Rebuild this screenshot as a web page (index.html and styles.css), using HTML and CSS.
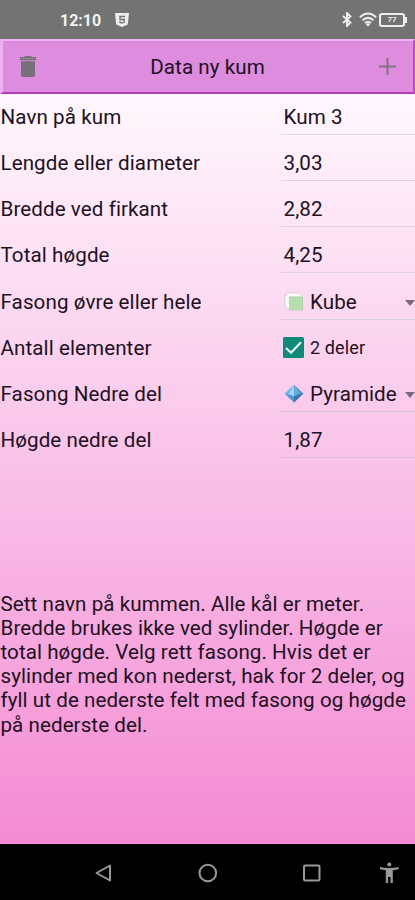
FILE: index.html
```html
<!DOCTYPE html>
<html lang="no">
<head>
<meta charset="utf-8">
<title>Data ny kum</title>
<link rel="stylesheet" href="styles.css">
</head>
<body>
<div class="phone">
  <header class="status">
    <div class="status-left">
      <span class="clock">12:10</span>
      <svg width="14" height="14" viewBox="0 0 14 14"><path d="M0 0h14l-1.2 11.5L7 14l-5.800-2.500z" fill="#eee"/><path d="M10 3.500H5v3h4.300L9 9.300l-2 .8-2-.8V8" fill="none" stroke="#737373" stroke-width="1.400"/></svg>
    </div>
    <div class="status-right">
      <svg class="bt" width="10" height="15" viewBox="0 0 10 15"><path d="M1 4l7.500 6.500L5 14V1l3.500 3.500L1 11" fill="none" stroke="#eee" stroke-width="1.900"/></svg>
      <svg class="wifi" width="18" height="15" viewBox="0 0 18 15"><g fill="none" stroke="#eee" stroke-width="2"><path d="M1 5.300Q9-2.300 17 5.300M3.600 8.300q5.400-4.800 10.800 0M6 11q3-2.600 6 0"/></g><path d="M6.800 12L9 14.700 11.200 12Q9 10.500 6.800 12z" fill="#eee"/></svg>
      <span class="battery"><span class="level">77</span></span>
    </div>
  </header>
  <div class="toolbar">
    <svg class="trash" width="16" height="21" viewBox="0 0 16 21"><path d="M4.500 0h7v1H16v3.300H0V1h4.500zM1 5.300h14V19q0 2-2 2H3q-2 0-2-2z" fill="#777078"/><path d="M1 2.500h14" stroke="#998d99" stroke-width=".8"/></svg>
    <h1>Data ny kum</h1>
    <svg class="plus" width="17" height="17" viewBox="0 0 17 17"><path d="M8.500 0v17M0 8.500h17" stroke="#817481" stroke-width="2"/></svg>
  </div>
  <main>
    <div class="row"><label>Navn på kum</label><div class="field">Kum 3</div></div>
    <div class="row"><label>Lengde eller diameter</label><div class="field">3,03</div></div>
    <div class="row"><label>Bredde ved firkant</label><div class="field">2,82</div></div>
    <div class="row"><label>Total høgde</label><div class="field">4,25</div></div>
    <div class="row"><label>Fasong øvre eller hele</label><div class="field select">
      <svg width="20" height="20" viewBox="0 0 20 20"><path d="M1 2.800L4 1h11.500l2.800 3v13.500H5.500L1 15z" fill="#fbfafb" stroke="#c9c3ca" stroke-width=".7"/><path d="M5.500 4.800h13v13h-13z" fill="#b5dfad" stroke="#a3c99f" stroke-width=".6"/><path d="M1 2.800l4.500 2" stroke="#d5d0d6" stroke-width=".7"/></svg>
      <span>Kube</span><i class="arrow"></i></div></div>
    <div class="row"><label>Antall elementer</label><div class="field check">
      <svg width="21" height="21" viewBox="0 0 21 21"><rect width="21" height="21" rx="1.500" fill="#0b8c78"/><path d="M3 11l5 4.800L18 5.300" fill="none" stroke="#eef6f8" stroke-width="2.200"/></svg>
      <span>2 deler</span></div></div>
    <div class="row"><label>Fasong Nedre del</label><div class="field select">
      <svg width="20" height="20" viewBox="0 0 20 20"><path d="M10 .8L.7 9.600 10 18.500z" fill="#70b8ed"/><path d="M10 .8L19.300 9.600 10 18.500z" fill="#4b91d0"/><path d="M10 .8L4.800 10 10 12.200 15.200 9z" fill="#a0d5f5"/><path d="M10 .8v11.400L15.200 9z" fill="#68a9dc"/><path d="M.7 9.600L10 18.500V12.200z" fill="#5198d8"/><path d="M10 12.200v6.300l9.300-8.900z" fill="#3674b4"/></svg>
      <span>Pyramide</span><i class="arrow"></i></div></div>
    <div class="row"><label>Høgde nedre del</label><div class="field">1,87</div></div>
    <p class="help">Sett navn på kummen. Alle kål er meter.<br>Bredde brukes ikke ved sylinder. Høgde er<br>total høgde. Velg rett fasong. Hvis det er<br>sylinder med kon nederst, hak for 2 deler, og<br>fyll ut de nederste felt med fasong og høgde<br>på nederste del.</p>
  </main>
  <nav class="nav">
    <svg width="415" height="56" viewBox="0 0 415 56"><g fill="none" stroke="#999" stroke-width="2"><path d="M110 21.500v15L96.500 29z" stroke-linejoin="round"/><circle cx="207.800" cy="29" r="8.300"/><rect x="304" y="21.500" width="15.500" height="15" rx="1.200"/></g><g fill="#999"><circle cx="389.300" cy="20.500" r="2"/><path d="M380 23q9.300 2 18.600 0v2.200l-5.800 1.100V39h-2.300v-6h-2.400v6h-2.300V26.300L380 25.200z"/></g></svg>
  </nav>
</div>
</body>
</html>
```
FILE: styles.css
```css
* { box-sizing: border-box; }
body { margin: 0; font-family: Roboto, sans-serif; color: #21111f; }
svg { display: block; flex: none; }
.phone { width: 415px; height: 900px; display: flex; flex-direction: column; overflow: hidden; }
.status { height: 39px; background: #737373; display: flex; justify-content: space-between; padding: 0 10px 0 60px; }
.status-left, .status-right { display: flex; align-items: center; }
.status-left svg { margin-left: 14px; }
.clock { font-size: 16px; font-weight: 700; line-height: 20px; color: #f2f2f2; padding-top: 2px; }
.bt { margin-right: 7px; }
.wifi { margin-right: 2px; }
.battery { width: 26px; height: 14px; border: 2px solid #eee; border-radius: 3px; display: flex; align-items: center; justify-content: center; position: relative; }
.battery::after { content: ""; position: absolute; right: -4px; top: 2px; width: 2px; height: 6px; background: #eee; }
.level { font-size: 8px; font-weight: 700; line-height: 9px; color: #eee; }
.toolbar { height: 55px; background: #dd8cde; border-style: solid; border-width: 2px 2px 2px 3px; border-color: #efb1ef #bf4bc4 #b53cb9 #edb0f0; display: flex; align-items: center; justify-content: space-between; padding: 0 17px; }
.toolbar h1 { margin: 0; font-size: 20.600px; font-weight: 400; letter-spacing: .06px; }
main { height: 750px; background: linear-gradient(#fff8fd, #f48bd3); }
.row { height: 46.150px; display: flex; }
.row label { width: 281px; padding-left: .5px; line-height: 47px; font-size: 20.600px; letter-spacing: .08px; white-space: nowrap; }
.field { width: 134px; height: 41px; padding: 6px 0 0 2.500px; border-bottom: 1px solid rgba(165, 180, 195, .38); font-size: 20.600px; line-height: 35px; letter-spacing: .06px; }
.select, .check { display: flex; align-items: center; }
.select { padding-top: 7px; padding-left: 3px; }
.select svg { margin-right: 6px; }
.check { border: 0; padding-left: 2px; padding-top: 5px; font-size: 18px; letter-spacing: .12px; }
.check svg { margin-right: 6px; }
.arrow { margin-left: auto; margin-top: 2px; border: 5px solid transparent; border-top: 6px solid #78697a; border-bottom: 0; }
.help { margin: 128.500px 0 0; padding-left: .5px; font-size: 20.600px; line-height: 24.200px; letter-spacing: .06px; white-space: nowrap; }
.nav { height: 56px; background: #000; }
```
